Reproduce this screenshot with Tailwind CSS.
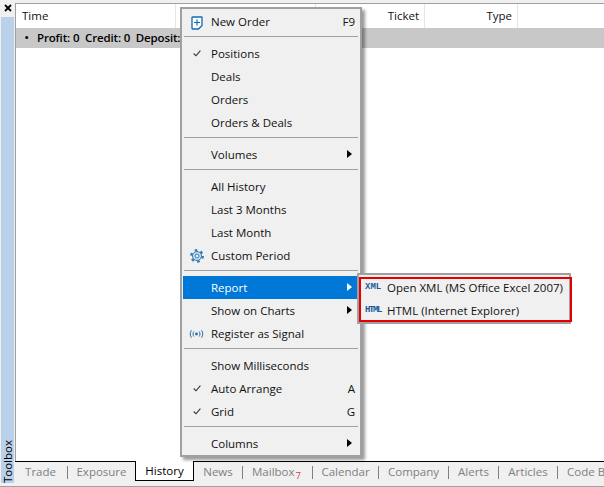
<!DOCTYPE html>
<html lang="en">
<head>
<meta charset="UTF-8">
<title>Toolbox History</title>
<script src="https://cdn.jsdelivr.net/npm/@tailwindcss/browser@4"></script>
</head>
<body class="bg-[#f0f0f0] w-[604px] h-[487px] overflow-hidden relative font-['Open_Sans',sans-serif] text-[11.5px] text-[#111]">

<div class="flex h-[487px] border-b border-[#a0a0a0]">
    <!-- toolbox strip -->
    <div class="w-[15px] flex flex-col shrink-0">
        <div class="h-[17px] w-full flex items-center justify-center pb-[1px]">
            <svg width="8" height="8" viewBox="0 0 8 8"><path d="M1 1l6 6M7 1l-6 6" stroke="#000" stroke-width="1.8" fill="none"/></svg>
        </div>
        <div class="w-[13px] ml-[1px] h-[466px] bg-[#b9d1ea] flex items-end justify-center">
            <span class="[writing-mode:vertical-rl] rotate-180 leading-[13px] text-black pb-[3px]">Toolbox</span>
        </div>
    </div>

    <div class="flex-1 flex flex-col min-w-0 pt-[3px] overflow-hidden">
        <div class="flex-1 bg-white border-t border-l border-[#a0a0a0] flex flex-col min-h-0">
            <!-- table header -->
            <div class="flex h-[24px] shrink-0">
                <div class="w-[160px] border-r border-[#e5e5e5] pl-[6px] leading-[23px]">Time</div>
                <div class="w-[140px] border-r border-[#e5e5e5]"></div>
                <div class="w-[109px] border-r border-[#e5e5e5] pr-[5px] text-right leading-[23px]">Ticket</div>
                <div class="w-[93px] border-r border-[#e5e5e5] pr-[5px] text-right leading-[23px]">Type</div>
            </div>
            <div class="h-[20px] bg-[#c8c8c8] flex items-center shrink-0 font-semibold text-black tracking-[-0.15px]">
                <span class="w-[21px] text-center">•</span>
                <span class="whitespace-pre">Profit: 0  Credit: 0  Deposit: 0</span>
            </div>
        </div>

        <!-- bottom tabs -->
        <div class="h-[22px] shrink-0 bg-[#f0f0f0] border-t border-black flex text-[#808080] mb-[3px]">
            <div class="w-[52px] shrink-0 h-[20px] flex items-center justify-end pr-[11px]">Trade</div>
            <div class="w-[1px] shrink-0 h-[13px] mt-[4px] bg-[#808080]"></div>
            <div class="w-[67px] shrink-0 h-[20px] flex items-center justify-center">Exposure</div>
            <div class="w-[59px] shrink-0 h-[20px] -mt-[1px] bg-white border border-t-0 border-black text-black flex items-center justify-center">History</div>
            <div class="w-[48px] shrink-0 h-[20px] flex items-center justify-center">News</div>
            <div class="w-[1px] shrink-0 h-[13px] mt-[4px] bg-[#808080]"></div>
            <div class="w-[69px] shrink-0 h-[20px] flex items-center pl-[9px] relative">Mailbox<span class="absolute right-[11px] top-[7px] text-[9px] text-[#e0303a]">7</span></div>
            <div class="w-[1px] shrink-0 h-[13px] mt-[4px] bg-[#808080]"></div>
            <div class="w-[65px] shrink-0 h-[20px] flex items-center justify-center">Calendar</div>
            <div class="w-[1px] shrink-0 h-[13px] mt-[4px] bg-[#808080]"></div>
            <div class="w-[69px] shrink-0 h-[20px] flex items-center justify-center">Company</div>
            <div class="w-[1px] shrink-0 h-[13px] mt-[4px] bg-[#808080]"></div>
            <div class="w-[49px] shrink-0 h-[20px] flex items-center justify-center">Alerts</div>
            <div class="w-[1px] shrink-0 h-[13px] mt-[4px] bg-[#808080]"></div>
            <div class="w-[58px] shrink-0 h-[20px] flex items-center justify-center">Articles</div>
            <div class="w-[1px] shrink-0 h-[13px] mt-[4px] bg-[#808080]"></div>
            <div class="h-[20px] shrink-0 pl-[9px] flex items-center whitespace-nowrap">Code Base</div>
        </div>
    </div>
</div>

<!-- context menu -->
<div class="absolute left-[180px] top-[7px] w-[182px] h-[450px] bg-[#f0f0f0] border-2 border-[#a0a0a0] shadow-[3px_3px_3px_rgba(0,0,0,0.4)] pt-[1px] px-[1px]">
    <div class="h-[23px] flex items-center pl-[28px] pr-[4px] relative">
        <svg class="absolute left-[8px] top-[6px]" width="12" height="14" viewBox="0 0 12 14"><path d="M1 1.500a.5.500 0 0 1 .5-.5h9a.5.500 0 0 1 .5.500V9.500L7.500 13h-6a.5.500 0 0 1-.5-.500z" fill="#fff" stroke="#0f6cb5" stroke-width="1.300"/><path d="M6 3.500v6M3 6.500h6" stroke="#0f6cb5" stroke-width="1.200"/></svg>
        <span class="flex-1">New Order</span><span>F9</span>
    </div>
    <div class="h-[9px] pt-[3px] px-[1px]"><div class="h-[1px] bg-[#a0a0a0]"></div></div>

    <div class="h-[23px] flex items-center pl-[28px] relative">
        <svg class="absolute left-[10px] top-[8px]" width="8" height="7" viewBox="0 0 8 7"><path d="M.7 3.500l2.300 2.300L7.400.7" stroke="#333" stroke-width="1.100" fill="none"/></svg>
        Positions
    </div>
    <div class="h-[23px] flex items-center pl-[28px]">Deals</div>
    <div class="h-[23px] flex items-center pl-[28px]">Orders</div>
    <div class="h-[23px] flex items-center pl-[28px]">Orders &amp; Deals</div>
    <div class="h-[9px] pt-[3px] px-[1px]"><div class="h-[1px] bg-[#a0a0a0]"></div></div>

    <div class="h-[23px] flex items-center pl-[28px] relative">Volumes
        <svg class="absolute right-[7px] top-[7px]" width="5" height="8" viewBox="0 0 5 8"><path d="M0 0l5 4-5 4z" fill="#000"/></svg>
    </div>
    <div class="h-[9px] pt-[3px] px-[1px]"><div class="h-[1px] bg-[#a0a0a0]"></div></div>

    <div class="h-[23px] flex items-center pl-[28px]">All History</div>
    <div class="h-[23px] flex items-center pl-[28px]">Last 3 Months</div>
    <div class="h-[23px] flex items-center pl-[28px]">Last Month</div>
    <div class="h-[23px] flex items-center pl-[28px] relative">
        <svg class="absolute left-[7px] top-[5px]" width="14" height="14" viewBox="0 0 14 14"><circle cx="7" cy="7" r="5.700" fill="none" stroke="#2f7ab5" stroke-width="2.400" stroke-dasharray="2.500 3.470"/><circle cx="7" cy="7" r="4.500" fill="#cfe0ef" stroke="#2f7ab5"/><circle cx="7" cy="7" r="2" fill="#f0f0f0" stroke="#2f7ab5"/></svg>
        Custom Period
    </div>
    <div class="h-[9px] pt-[3px] px-[1px]"><div class="h-[1px] bg-[#a0a0a0]"></div></div>

    <div class="h-[23px] flex items-center pl-[28px] relative bg-[#0078d7] text-white">Report
        <svg class="absolute right-[7px] top-[7px]" width="5" height="8" viewBox="0 0 5 8"><path d="M0 0l5 4-5 4z" fill="#fff"/></svg>
    </div>
    <div class="h-[23px] flex items-center pl-[28px] relative">Show on Charts
        <svg class="absolute right-[7px] top-[7px]" width="5" height="8" viewBox="0 0 5 8"><path d="M0 0l5 4-5 4z" fill="#000"/></svg>
    </div>
    <div class="h-[23px] flex items-center pl-[28px] relative">
        <svg class="absolute left-[6px] top-[8px]" width="15" height="8" viewBox="0 0 15 8"><path d="M2.500.3C.8 2.500.8 5.500 2.500 7.700M4.800 1.500C3.800 3 3.800 5 4.800 6.500M12.500.3c1.700 2.200 1.700 5.200 0 7.400M10.200 1.500c1 1.500 1 3.500 0 5" stroke="#2f6fa8" fill="none"/><circle cx="7.500" cy="4" r="1.400" fill="#2f6fa8"/></svg>
        Register as Signal
    </div>
    <div class="h-[9px] pt-[3px] px-[1px]"><div class="h-[1px] bg-[#a0a0a0]"></div></div>

    <div class="h-[23px] flex items-center pl-[28px]">Show Milliseconds</div>
    <div class="h-[23px] flex items-center pl-[28px] pr-[4px] relative">
        <svg class="absolute left-[10px] top-[8px]" width="8" height="7" viewBox="0 0 8 7"><path d="M.7 3.500l2.300 2.300L7.400.7" stroke="#333" stroke-width="1.100" fill="none"/></svg>
        <span class="flex-1">Auto Arrange</span><span>A</span>
    </div>
    <div class="h-[23px] flex items-center pl-[28px] pr-[4px] relative">
        <svg class="absolute left-[10px] top-[8px]" width="8" height="7" viewBox="0 0 8 7"><path d="M.7 3.500l2.300 2.300L7.400.7" stroke="#333" stroke-width="1.100" fill="none"/></svg>
        <span class="flex-1">Grid</span><span>G</span>
    </div>
    <div class="h-[9px] pt-[3px] px-[1px]"><div class="h-[1px] bg-[#a0a0a0]"></div></div>

    <div class="h-[23px] flex items-center pl-[28px] relative">Columns
        <svg class="absolute right-[7px] top-[7px]" width="5" height="8" viewBox="0 0 5 8"><path d="M0 0l5 4-5 4z" fill="#000"/></svg>
    </div>
</div>

<!-- report submenu -->
<div class="absolute left-[357px] top-[273px] w-[214px] h-[51px] bg-[#f0f0f0] border-2 border-[#a0a0a0] pt-[1px]">
    <div class="h-[23px] flex items-center relative pl-[28px]">
        <span class="absolute left-[6px] top-[6px] font-['Liberation_Mono',monospace] font-bold text-[9px] leading-[11px] text-[#1a5d9c]">XML</span>
        Open XML (MS Office Excel 2007)
    </div>
    <div class="h-[23px] flex items-center relative pl-[28px]">
        <span class="absolute left-[6px] top-[6px] font-['Liberation_Mono',monospace] font-bold text-[9px] leading-[11px] text-[#1a5d9c] tracking-[-1.400px]">HTML</span>
        HTML (Internet Explorer)
    </div>
</div>

<!-- red highlight around the submenu -->
<div class="absolute left-[359px] top-[277px] w-[213px] h-[45px] border-2 border-[#e60000]"></div>

</body>
</html>
